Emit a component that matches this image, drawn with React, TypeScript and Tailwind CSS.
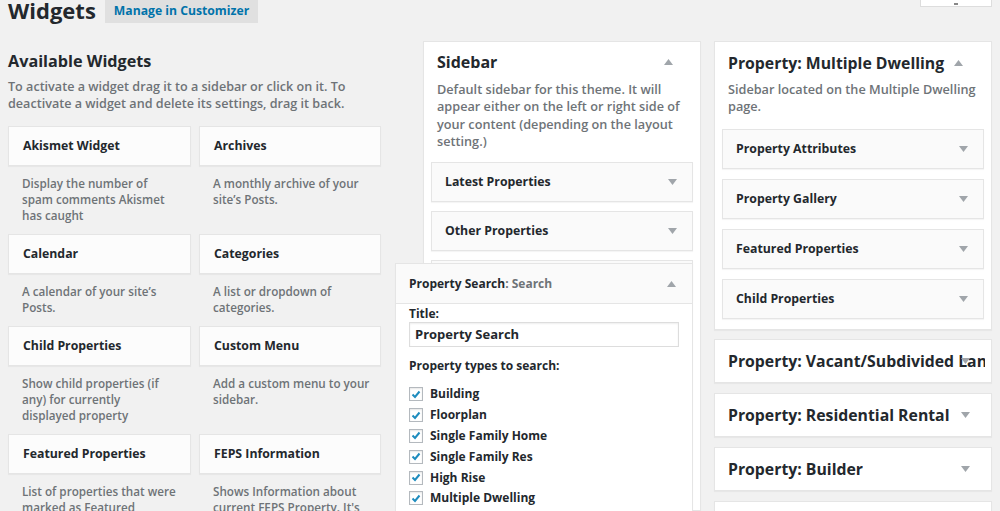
import React from "react";

const Up = ({ c = "#a0a5aa" }: { c?: string }) => (
  <svg width="9" height="6" viewBox="0 0 9 6"><path d="M0 6 L4.5 0 L9 6 Z" fill={c} /></svg>
);
const Down = ({ c = "#a0a5aa" }: { c?: string }) => (
  <svg width="9" height="6" viewBox="0 0 9 6"><path d="M0 0 L4.5 6 L9 0 Z" fill={c} /></svg>
);

const widgets: { t: string; d: string }[] = [
  { t: "Akismet Widget", d: "Display the number of\nspam comments Akismet\nhas caught" },
  { t: "Archives", d: "A monthly archive of your\nsite’s Posts." },
  { t: "Calendar", d: "A calendar of your site’s\nPosts." },
  { t: "Categories", d: "A list or dropdown of\ncategories." },
  { t: "Child Properties", d: "Show child properties (if\nany) for currently\ndisplayed property" },
  { t: "Custom Menu", d: "Add a custom menu to your\nsidebar." },
  { t: "Featured Properties", d: "List of properties that were\nmarked as Featured" },
  { t: "FEPS Information", d: "Shows Information about\ncurrent FEPS Property. It's\nused on property pages." },
];

const InnerBox = ({ t }: { t: string }) => (
  <div className="h-[40px] bg-[#fafafa] border border-[#e5e5e5] flex items-center justify-between pl-[13px] pr-[15px] shadow-[0_1px_1px_rgba(0,0,0,0.04)]">
    <span className="text-[12.3px] font-bold text-[#23282d]">{t}</span>
    <Down />
  </div>
);

const types = ["Building", "Floorplan", "Single Family Home", "Single Family Res", "High Rise", "Multiple Dwelling"];

export default function App() {
  return (
    <div className="w-[1000px] h-[511px] overflow-hidden bg-[#f1f1f1] relative font-['Open_Sans',sans-serif] text-[#23282d]">
      {/* header */}
      <div className="flex items-start h-[41px] pl-[8px] pr-[8px]">
        <h1 className="text-[22px] font-bold leading-[29px] -mt-[4px]">Widgets</h1>
        <div className="ml-[9px] h-[23px] bg-[#e0e0e0] px-[9px] flex items-center">
          <span className="text-[12.2px] font-bold text-[#0073aa]">Manage in Customizer</span>
        </div>
        <div className="ml-auto w-[72px] h-[7px] bg-white border border-[#ddd] border-t-0 flex justify-center">
          <div className="w-[4px] h-[2px] bg-[#888] mt-[3px]" />
        </div>
      </div>

      <div className="flex items-start pl-[8px]">
        {/* left column */}
        <div className="w-[374px] pt-[8px]">
          <h2 className="text-[16.2px] font-bold leading-[24px]">Available Widgets</h2>
          <p className="mt-[5px] text-[12.6px] font-semibold leading-[17px] text-[#6e7377]">
            To activate a widget drag it to a sidebar or click on it. To deactivate a widget and delete its settings, drag it back.
          </p>
          <div className="mt-[14px] grid grid-cols-[183px_182px] gap-x-[8px]">
            {widgets.map((w) => (
              <div key={w.t}>
                <div className="h-[40px] bg-[#fcfcfc] border border-[#e5e5e5] flex items-center pl-[14px] shadow-[0_1px_1px_rgba(0,0,0,0.04)]">
                  <span className="text-[12.3px] font-bold">{w.t}</span>
                </div>
                <p className="pl-[14px] pr-[4px] pt-[9px] pb-[11px] text-[11.7px] font-semibold leading-[16px] text-[#6e7377] whitespace-pre-line">{w.d}</p>
              </div>
            ))}
          </div>
        </div>

        {/* middle column */}
        <div className="ml-[41px] w-[278px] h-[470px] bg-white border border-[#e5e5e5] shadow-[0_1px_1px_rgba(0,0,0,0.04)] px-[7px]">
          <div className="flex items-center justify-between pl-[6px] pr-[20px] pt-[9px]">
            <h3 className="text-[16px] font-bold leading-[22px]">Sidebar</h3>
            <Up />
          </div>
          <p className="pl-[6px] pr-[2px] mt-[8px] text-[12.7px] font-semibold leading-[17.3px] text-[#6e7377]">
            Default sidebar for this theme. It will appear either on the left or right side of your content (depending on the layout setting.)
          </p>
          <div className="mt-[12px] flex flex-col gap-[9px]">
            <InnerBox t="Latest Properties" />
            <InnerBox t="Other Properties" />
            <InnerBox t="Featured Properties" />
          </div>
        </div>

        {/* right column */}
        <div className="ml-[13px] w-[278px] flex flex-col gap-[9px]">
          <div className="bg-white border border-[#e5e5e5] shadow-[0_1px_1px_rgba(0,0,0,0.04)] px-[7px] pb-[10px]">
            <div className="flex items-center justify-between pl-[6px] pr-[21px] pt-[10px]">
              <h3 className="text-[15.8px] font-bold leading-[22px]">Property: Multiple Dwelling</h3>
              <Up />
            </div>
            <p className="pl-[6px] mt-[7px] text-[12.7px] font-semibold leading-[17px] text-[#6e7377]">
              Sidebar located on the Multiple Dwelling page.
            </p>
            <div className="mt-[14px] flex flex-col gap-[10px]">
              <InnerBox t="Property Attributes" />
              <InnerBox t="Property Gallery" />
              <InnerBox t="Featured Properties" />
              <InnerBox t="Child Properties" />
            </div>
          </div>
          {["Property: Vacant/Subdivided Land", "Property: Residential Rental", "Property: Builder", "Property: Commercial"].map((t) => (
            <div key={t} className="h-[44px] bg-white border border-[#e5e5e5] shadow-[0_1px_1px_rgba(0,0,0,0.04)] relative flex items-center pl-[13px] pr-[6px] mb-[1px]">
              <div className="overflow-hidden whitespace-nowrap">
                <span className="text-[15.8px] font-bold">{t}</span>
              </div>
              <div className="absolute right-[21px] top-[18px]"><Down /></div>
            </div>
          ))}
        </div>
      </div>

      {/* dragged widget overlay */}
      <div className="absolute left-[395px] top-[263px] w-[298px] h-[260px] bg-white border border-[#e5e5e5] shadow-[0_1px_1px_rgba(0,0,0,0.04)]">
        <div className="h-[40px] bg-[#fafafa] border-b border-[#e5e5e5] flex items-center justify-between pl-[13px] pr-[16px]">
          <span className="text-[12px] font-bold">Property Search<span className="text-[#6e7377]">: Search</span></span>
          <Up />
        </div>
        <div className="px-[13px] pt-[2px]">
          <div className="text-[12px] font-bold leading-[16px]">Title:</div>
          <div className="w-[270px] h-[25px] border border-[#ddd] flex items-center pl-[5px] shadow-[inset_0_1px_2px_rgba(0,0,0,0.07)]">
            <span className="text-[13px] font-bold">Property Search</span>
          </div>
          <div className="mt-[11px] text-[12px] font-bold leading-[16px]">Property types to search:</div>
          <div className="mt-[10px] flex flex-col">
            {types.map((t) => (
              <div key={t} className="h-[20.8px] flex items-center gap-[7px]">
                <div className="w-[14px] h-[14px] border border-[#b4b9be] bg-white flex items-center justify-center shadow-[inset_0_1px_2px_rgba(0,0,0,0.1)]">
                  <svg width="10" height="9" viewBox="0 0 10 9"><path d="M1.5 4.5 L4 7 L8.5 1.5" stroke="#1e8cbe" strokeWidth="2" fill="none" /></svg>
                </div>
                <span className="text-[12px] font-bold">{t}</span>
              </div>
            ))}
          </div>
        </div>
      </div>
    </div>
  );
}
